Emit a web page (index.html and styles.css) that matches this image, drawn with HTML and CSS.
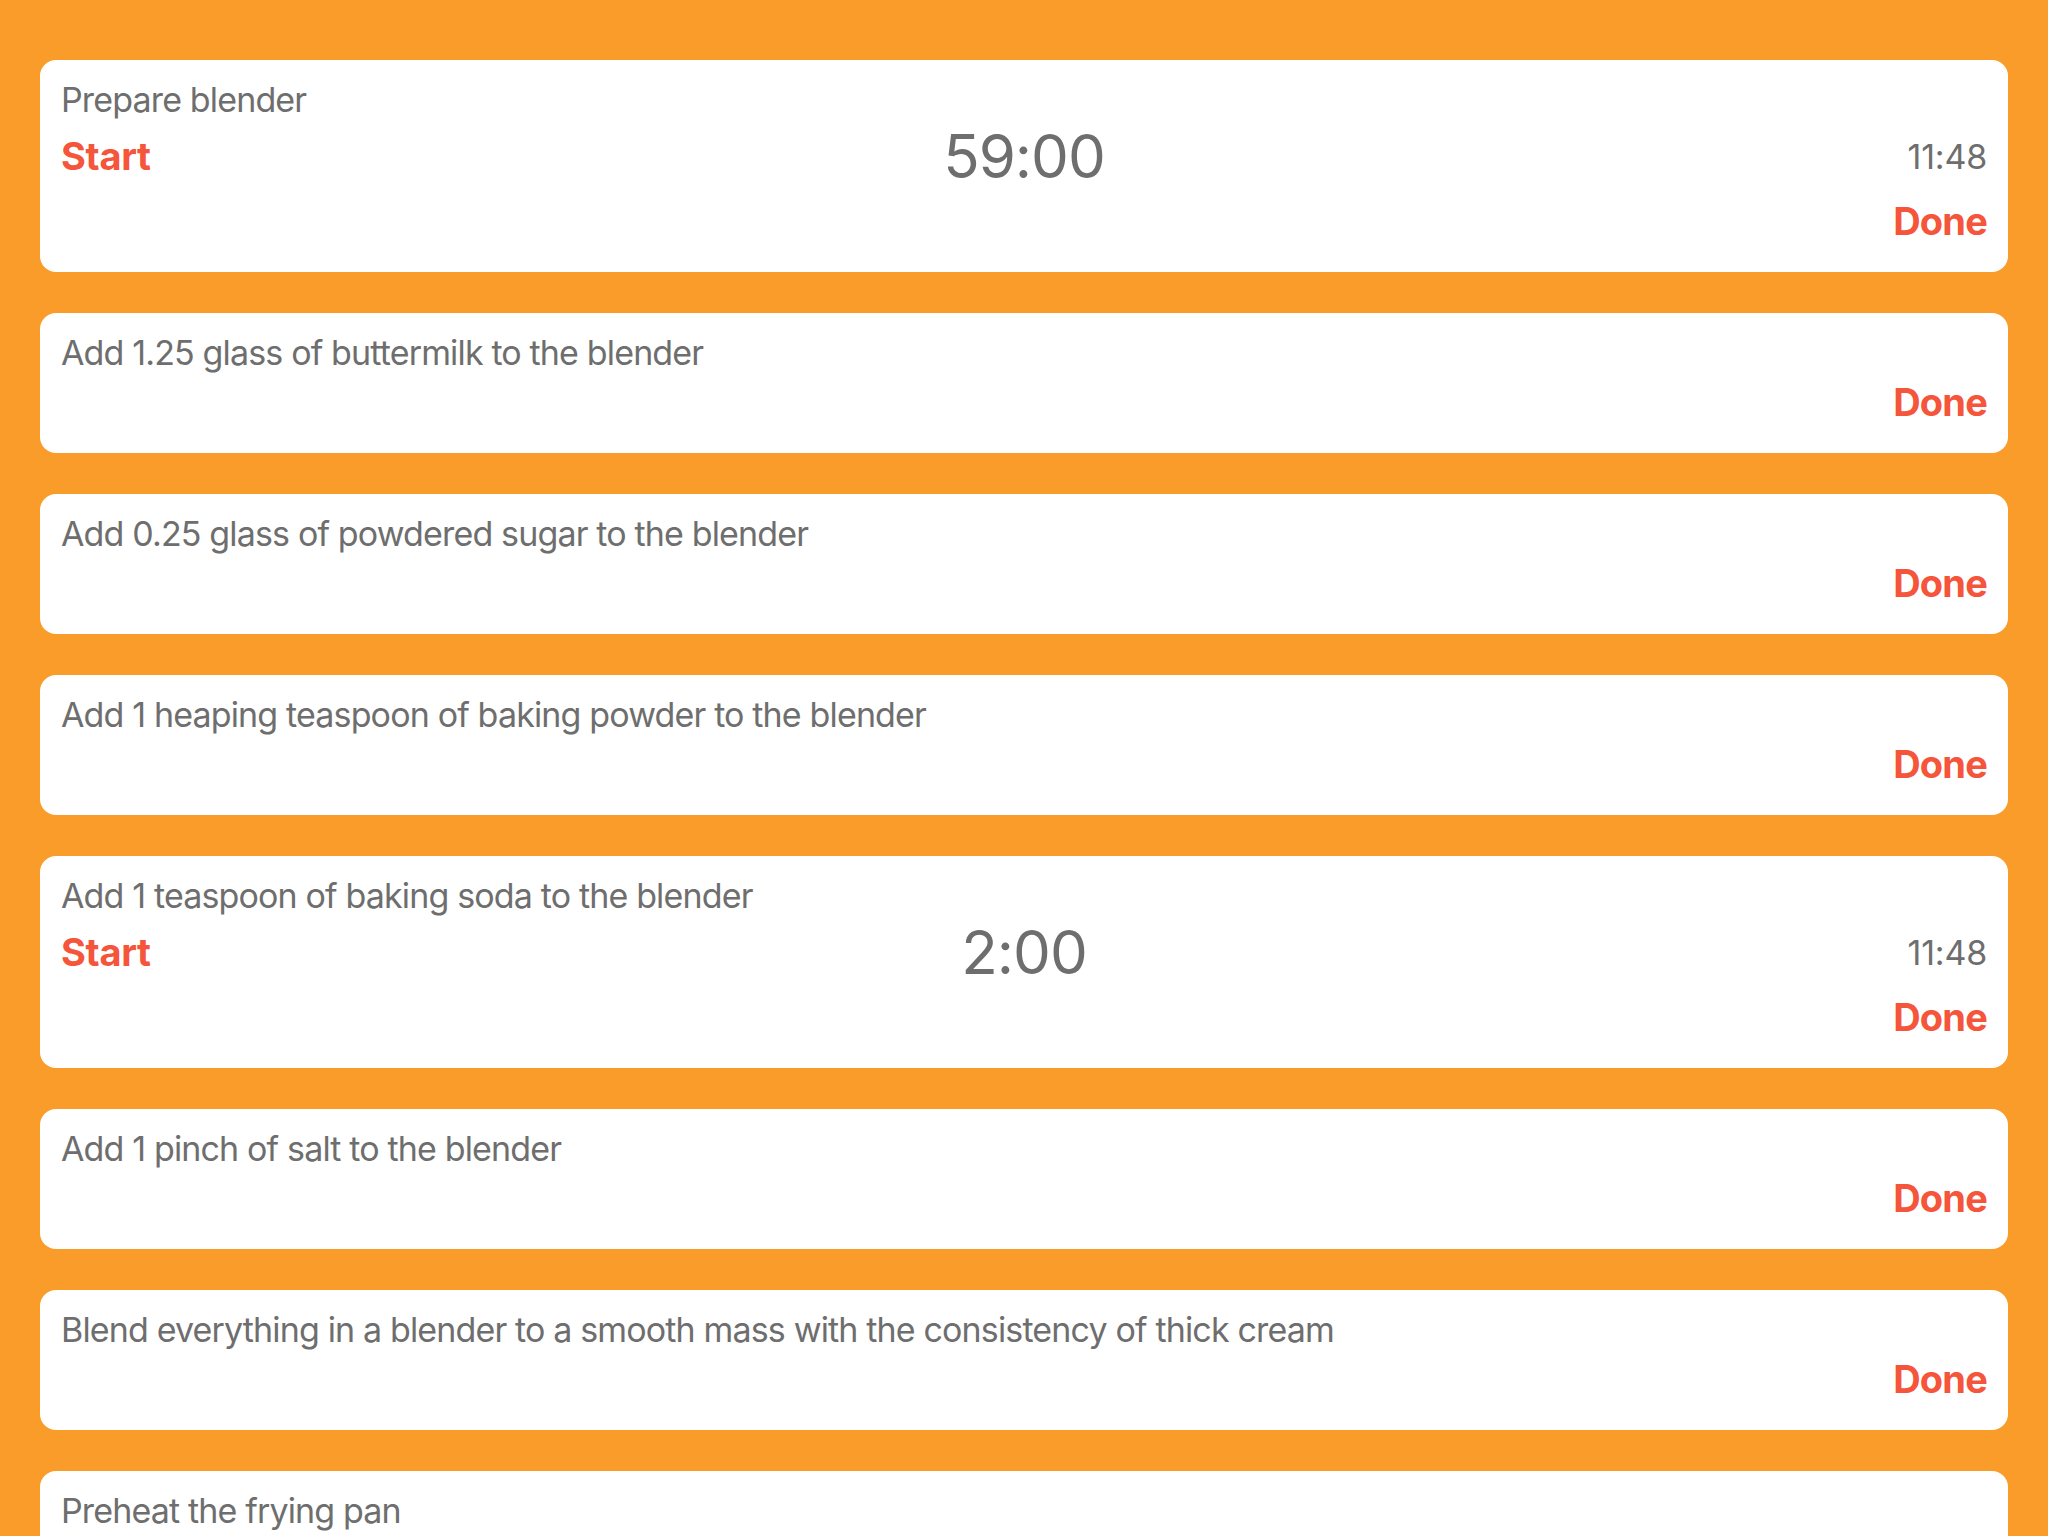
FILE: index.html
```html
<!DOCTYPE html>
<html lang="en">
<head>
<meta charset="utf-8">
<title>Recipe steps</title>
<link rel="stylesheet" href="styles.css">
</head>
<body>
<main class="steps">
  <section class="card">
    <div class="title">Prepare blender</div>
    <div class="timer-row">
      <span class="start">Start</span>
      <span class="timer">59:00</span>
      <span class="clock">11:48</span>
    </div>
    <div class="done">Done</div>
  </section>
  <section class="card">
    <div class="title">Add 1.25 glass of buttermilk to the blender</div>
    <div class="done">Done</div>
  </section>
  <section class="card">
    <div class="title">Add 0.25 glass of powdered sugar to the blender</div>
    <div class="done">Done</div>
  </section>
  <section class="card">
    <div class="title">Add 1 heaping teaspoon of baking powder to the blender</div>
    <div class="done">Done</div>
  </section>
  <section class="card">
    <div class="title">Add 1 teaspoon of baking soda to the blender</div>
    <div class="timer-row">
      <span class="start">Start</span>
      <span class="timer">2:00</span>
      <span class="clock">11:48</span>
    </div>
    <div class="done">Done</div>
  </section>
  <section class="card">
    <div class="title">Add 1 pinch of salt to the blender</div>
    <div class="done">Done</div>
  </section>
  <section class="card">
    <div class="title">Blend everything in a blender to a smooth mass with the consistency of thick cream</div>
    <div class="done">Done</div>
  </section>
  <section class="card">
    <div class="title">Preheat the frying pan</div>
    <div class="done">Done</div>
  </section>
</main>
</body>
</html>
```

FILE: styles.css
```css
html, body {
  margin: 0;
  padding: 0;
}
body {
  background: #fa9c2a;
  font-family: Inter, "Noto Sans", sans-serif;
  height: 1536px;
  overflow: hidden;
}
.steps {
  display: flex;
  flex-direction: column;
  gap: 41px;
  padding: 60px 40px 0 40px;
}
.card {
  background: #ffffff;
  border-radius: 16px;
  padding: 19px 21px 28px 21px;
  display: flex;
  flex-direction: column;
}
.title {
  font-size: 34px;
  line-height: 41px;
  color: #6e6e6e;
  letter-spacing: -0.85px;
}
.timer-row {
  display: grid;
  grid-template-columns: 1fr auto 1fr;
  align-items: center;
  height: 72px;
}
.start {
  justify-self: start;
  font-size: 38px;
  font-weight: 700;
  color: #f5553a;
  letter-spacing: -0.3px;
}
.timer {
  font-size: 60px;
  line-height: 72px;
  color: #6e6e6e;
  font-weight: 400;
  letter-spacing: -1px;
}
.clock {
  justify-self: end;
  font-size: 34px;
  color: #6e6e6e;
  letter-spacing: -0.2px;
}
.done {
  align-self: flex-end;
  margin-top: 6px;
  font-size: 38px;
  line-height: 46px;
  font-weight: 700;
  color: #f5553a;
  letter-spacing: -0.8px;
}
```
